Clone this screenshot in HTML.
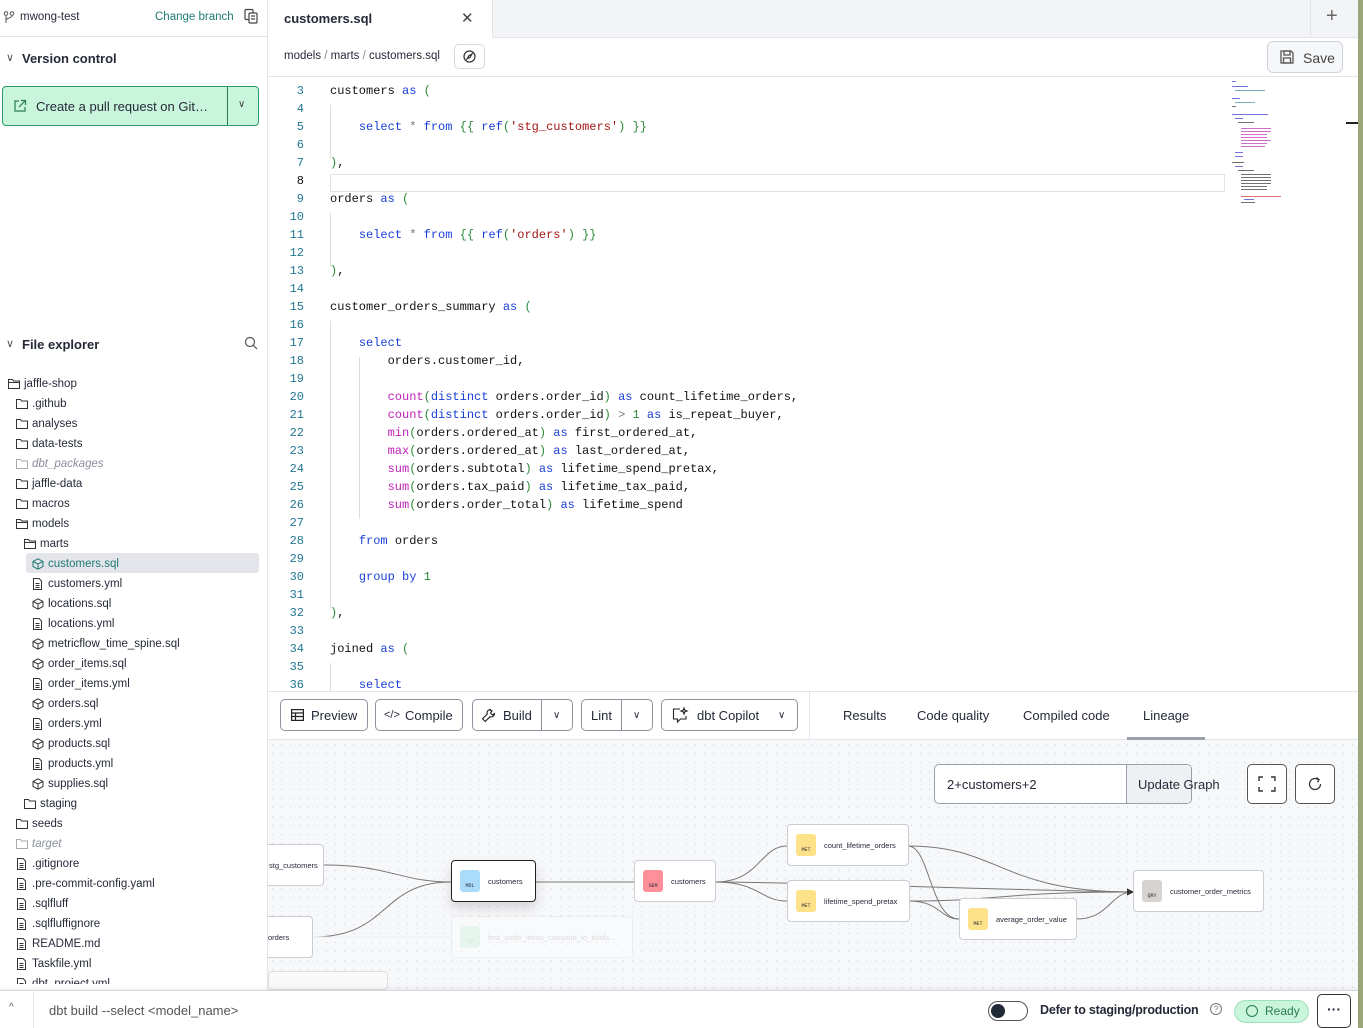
<!DOCTYPE html>
<html><head><meta charset="utf-8"><style>
*{box-sizing:border-box;margin:0;padding:0}
body{width:1363px;height:1028px;overflow:hidden;background:#fff;font-family:"Liberation Sans",sans-serif;color:#262a38;position:relative}
.abs{position:absolute}
#side{left:0;top:0;width:268px;height:990px;border-right:1px solid #e3e5ea;background:#fff;z-index:5}
.tr{position:absolute;height:20px;font-size:11.5px;line-height:20px;white-space:nowrap;color:#262a38}
.tr svg{position:absolute;top:4px}
.it{font-style:italic;color:#8a8f9b}
#code{left:268px;top:78px;width:1090px;height:613px;overflow:hidden;font-family:"Liberation Mono",monospace;font-size:12px}
.ln{position:absolute;left:0;width:36px;text-align:right;color:#237893;height:18px;line-height:18px}
.cl{position:absolute;left:62px;height:18px;line-height:18px;white-space:pre;color:#111}
.k{color:#1a3fd9}.f{color:#c022b8}.p{color:#2c8a3a}.s{color:#a31515}.o{color:#777}
.btn{position:absolute;top:699px;height:32px;border:1px solid #8d929e;border-radius:5px;background:#fff;font-size:13px;line-height:31px;color:#262a38}
.node{position:absolute;height:42px;background:#fff;border:1px solid #c9ccd3;border-radius:4px;font-size:7.5px;line-height:41px;white-space:nowrap;color:#262a38}
.badge{position:absolute;left:8px;top:9px;width:20px;height:22px;border-radius:3px;font-size:5px;line-height:8px;text-align:center;padding-top:12px;font-family:"Liberation Mono",monospace}
.nl{position:absolute;left:36px}
</style></head><body>
<div class="abs" style="left:1358px;top:0;width:5px;height:1028px;background:#9aa67a"></div>
<!-- sidebar -->
<div id="side" class="abs">
 <div class="abs" style="left:0;top:0;width:267px;height:37px;border-bottom:1px solid #e3e5ea"></div>
 <svg class="abs" style="left:3px;top:11px" width="12" height="13" viewBox="0 0 12 13" fill="none" stroke="#555" stroke-width="1"><circle cx="3" cy="2.5" r="1.8"/><circle cx="9" cy="2.5" r="1.8"/><path d="M3 4.5V12M9 4.5c0 3-6 2-6 5"/></svg>
 <div class="abs" style="left:20px;top:11px;font-size:11.5px">mwong-test</div>
 <div class="abs" style="left:155px;top:11px;font-size:11.5px;color:#1f7a74">Change branch</div>
 <svg class="abs" style="left:243px;top:8px" width="16" height="16" viewBox="0 0 16 16" fill="none" stroke="#444" stroke-width="1.2"><rect x="2" y="1.5" width="8" height="10" rx="1"/><rect x="6" y="5" width="8" height="10" rx="1" fill="#fff"/><path d="M8 8h4M8 11h4"/></svg>
 <div class="abs" style="left:6px;top:51px;font-size:11px;color:#555">&#x2228;</div>
 <div class="abs" style="left:22px;top:51px;font-size:13px;font-weight:bold">Version control</div>
 <div class="abs" style="left:2px;top:86px;width:257px;height:40px;border:1px solid #2b9a66;border-radius:4px;background:#c8f5dc"></div>
 <div class="abs" style="left:227px;top:87px;width:1px;height:38px;background:#2b7a55"></div>
 <svg class="abs" style="left:13px;top:99px" width="14" height="14" viewBox="0 0 14 14" fill="none" stroke="#2b7a55" stroke-width="1.2"><path d="M6 2H2v10h10V8M8 1.5h4.5V6M12.5 1.5 6 8"/></svg>
 <div class="abs" style="left:36px;top:99px;font-size:13px;color:#262a38">Create a pull request on Git…</div>
 <div class="abs" style="left:238px;top:99px;font-size:10px;color:#444">&#x2228;</div>
 <div class="abs" style="left:6px;top:337px;font-size:11px;color:#555">&#x2228;</div>
 <div class="abs" style="left:22px;top:337px;font-size:13px;font-weight:bold">File explorer</div>
 <svg class="abs" style="left:244px;top:336px" width="14" height="14" viewBox="0 0 14 14" fill="none" stroke="#555" stroke-width="1.2"><circle cx="6" cy="6" r="4.5"/><path d="M9.5 9.5 13 13"/></svg>
 <div class="abs" style="left:26px;top:553px;width:233px;height:20px;background:#e3e5ea;border-radius:3px"></div>
 <div id="tree"></div>
</div>
<script>
(function(){
var F='<svg width="12" height="11" viewBox="0 0 12 11" fill="none" stroke="#333" stroke-width="1"><path d="M.5 1.5h4l1 1.5h6v7.5H.5z"/></svg>';
var FO='<svg width="12" height="11" viewBox="0 0 12 11" fill="none" stroke="#333" stroke-width="1"><path d="M.5 1.5h4l1 1.5h6v7.5H.5zM.5 4.5h11"/></svg>';
var FG='<svg width="12" height="11" viewBox="0 0 12 11" fill="none" stroke="#aaa" stroke-width="1"><path d="M.5 1.5h4l1 1.5h6v7.5H.5z"/></svg>';
var C='<svg width="12" height="12" viewBox="0 0 12 12" fill="none" stroke="#333" stroke-width="1"><path d="M6 .8 11 3.5v5L6 11.2 1 8.5v-5zM1 3.5 6 6l5-2.5M6 6v5.2"/></svg>';
var CG=C.replace(/#333/g,'#1f7a74');
var D='<svg width="11" height="12" viewBox="0 0 11 12" fill="none" stroke="#333" stroke-width="1"><path d="M1.5.5h5.5l2.5 2.5v8.5h-8zM3.5 5.5h4M3.5 7.5h4M3.5 9.5h4"/></svg>';
var rows=[[8,FO,'jaffle-shop'],[16,F,'.github'],[16,F,'analyses'],[16,F,'data-tests'],[16,FG,'dbt_packages','it'],[16,F,'jaffle-data'],[16,F,'macros'],[16,FO,'models'],[24,FO,'marts'],[32,CG,'customers.sql','g'],[32,D,'customers.yml'],[32,C,'locations.sql'],[32,D,'locations.yml'],[32,C,'metricflow_time_spine.sql'],[32,C,'order_items.sql'],[32,D,'order_items.yml'],[32,C,'orders.sql'],[32,D,'orders.yml'],[32,C,'products.sql'],[32,D,'products.yml'],[32,C,'supplies.sql'],[24,F,'staging'],[16,F,'seeds'],[16,FG,'target','it'],[16,D,'.gitignore'],[16,D,'.pre-commit-config.yaml'],[16,D,'.sqlfluff'],[16,D,'.sqlfluffignore'],[16,D,'README.md'],[16,D,'Taskfile.yml'],[16,D,'dbt_project.yml']];
var h='';rows.forEach(function(r,i){var y=374+i*20;if(y>975)return;var st=r[3]=='g'?'color:#1f7a74':'';var cls=r[3]=='it'?'it':'';
h+='<div class="tr" style="left:'+r[0]+'px;top:'+y+'px;width:240px;'+(y>960?'height:10px;overflow:hidden;':'')+'">'+r[1].replace('<svg','<svg style="left:0"')+'<span class="'+cls+'" style="position:absolute;left:16px;'+st+'">'+r[2]+'</span></div>';});
document.getElementById('tree').innerHTML=h;
})();
</script>
<!-- tab bar -->
<div class="abs" style="left:268px;top:0;width:1090px;height:38px;background:#f3f4f6;border-bottom:1px solid #e3e5ea"></div>
<div class="abs" style="left:268px;top:0;width:225px;height:39px;background:#fff;border-right:1px solid #e3e5ea"></div>
<div class="abs" style="left:284px;top:11px;font-size:13px;font-weight:bold">customers.sql</div>
<div class="abs" style="left:461px;top:9px;font-size:15px;color:#444">&#x2715;</div>
<div class="abs" style="left:1310px;top:0;width:48px;height:38px;border-left:1px solid #e3e5ea"></div>
<div class="abs" style="left:1326px;top:5px;font-size:20px;color:#666">+</div>
<div class="abs" style="left:268px;top:38px;width:1090px;height:39px;background:#fff;border-bottom:1px solid #e3e5ea"></div>
<div class="abs" style="left:284px;top:50px;font-size:11.5px">models <span style="color:#888">/</span> marts <span style="color:#888">/</span> customers.sql</div>
<div class="abs" style="left:454px;top:44px;width:31px;height:25px;border:1px solid #d5d8de;border-radius:5px"></div>
<svg class="abs" style="left:462px;top:49px" width="15" height="15" viewBox="0 0 15 15" fill="none" stroke="#333" stroke-width="1.2"><circle cx="7.5" cy="7.5" r="5.5"/><path d="M10 5 8.2 8.2 5 10l1.8-3.2z"/></svg>
<div class="abs" style="left:1267px;top:41px;width:76px;height:32px;border:1px solid #cfd2d8;border-radius:6px;background:#f6f7f9"></div>
<svg class="abs" style="left:1279px;top:49px" width="16" height="16" viewBox="0 0 16 16" fill="none" stroke="#555" stroke-width="1.3"><path d="M2 2h10l2 2v10H2z"/><rect x="5" y="2" width="6" height="4"/><rect x="4.5" y="9" width="7" height="5"/></svg>
<div class="abs" style="left:1303px;top:50px;font-size:14px;color:#444">Save</div>
<!-- code -->
<div id="code" class="abs">
 <div class="abs" style="left:62px;top:96px;width:895px;height:18px;border:1px solid #e2e2e2"></div>
 <div class="abs" style="left:62px;top:27px;width:1px;height:54px;background:#ddd"></div>
 <div class="abs" style="left:62px;top:135px;width:1px;height:54px;background:#ddd"></div>
 <div class="abs" style="left:62px;top:243px;width:1px;height:288px;background:#ddd"></div>
 <div class="abs" style="left:91px;top:279px;width:1px;height:162px;background:#ddd"></div>
 <div class="abs" style="left:62px;top:585px;width:1px;height:40px;background:#ddd"></div>
 <div id="lines"></div>
 <div class="abs" style="left:1078px;top:44px;width:12px;height:2px;background:#222"></div>
 <div id="mini" class="abs" style="left:964px;top:0;width:114px;height:130px"></div>
</div>
<script>
(function(){
var L={3:'customers <k>as</k> <p>(</p>',5:'    <k>select</k> <o>*</o> <k>from</k> <p>{{</p> <k>ref</k><p>(</p><s>\'stg_customers\'</s><p>)</p> <p>}}</p>',7:'<p>)</p>,',9:'orders <k>as</k> <p>(</p>',11:'    <k>select</k> <o>*</o> <k>from</k> <p>{{</p> <k>ref</k><p>(</p><s>\'orders\'</s><p>)</p> <p>}}</p>',13:'<p>)</p>,',15:'customer_orders_summary <k>as</k> <p>(</p>',17:'    <k>select</k>',18:'        orders.customer_id,',20:'        <f>count</f><p>(</p><k>distinct</k> orders.order_id<p>)</p> <k>as</k> count_lifetime_orders,',21:'        <f>count</f><p>(</p><k>distinct</k> orders.order_id<p>)</p> <o>&gt;</o> <p>1</p> <k>as</k> is_repeat_buyer,',22:'        <f>min</f><p>(</p>orders.ordered_at<p>)</p> <k>as</k> first_ordered_at,',23:'        <f>max</f><p>(</p>orders.ordered_at<p>)</p> <k>as</k> last_ordered_at,',24:'        <f>sum</f><p>(</p>orders.subtotal<p>)</p> <k>as</k> lifetime_spend_pretax,',25:'        <f>sum</f><p>(</p>orders.tax_paid<p>)</p> <k>as</k> lifetime_tax_paid,',26:'        <f>sum</f><p>(</p>orders.order_total<p>)</p> <k>as</k> lifetime_spend',28:'    <k>from</k> orders',30:'    <k>group by</k> <p>1</p>',32:'<p>)</p>,',34:'joined <k>as</k> <p>(</p>',36:'    <k>select</k>'};
var h='';for(var n=2;n<=37;n++){var y=4+(n-3)*18;var c=L[n]||'';c=c.replace(/<(k|f|p|s|o)>/g,'<span class="$1">').replace(/<\/(k|f|p|s|o)>/g,'</span>');
h+='<div class="ln" style="top:'+y+'px;'+(n==8?'color:#111':'')+'">'+n+'</div><div class="cl" style="top:'+y+'px">'+c+'</div>';}
document.getElementById('lines').innerHTML=h;
var m='';var ls=[[0,3,4,'#33c'],[0,8,16,'#33c'],[3,12,30,'#48a'],[0,20,8,'#33c'],[3,24,20,'#48a'],[0,28,4,'#333'],[0,36,36,'#33c'],[3,40,8,'#33c'],[6,44,16,'#333'],[9,50,30,'#b3b'],[9,53,30,'#b3b'],[9,56,26,'#b3b'],[9,59,26,'#b3b'],[9,62,30,'#b3b'],[9,65,26,'#b3b'],[9,68,24,'#b3b'],[3,74,8,'#33c'],[3,78,8,'#33c'],[0,84,12,'#333'],[3,88,8,'#33c'],[6,92,16,'#333'],[9,96,30,'#333'],[9,99,30,'#333'],[9,102,30,'#333'],[9,105,30,'#333'],[9,108,26,'#333'],[9,111,26,'#333'],[9,118,40,'#c33'],[12,121,10,'#33c'],[9,124,14,'#333']];
ls.forEach(function(a){m+='<div style="position:absolute;left:'+a[0]+'px;top:'+a[1]+'px;width:'+a[2]+'px;height:1px;background:'+a[3]+';opacity:.7"></div>'});
document.getElementById('mini').innerHTML=m;
})();
</script>
<!-- toolbar -->
<div class="abs" style="left:268px;top:691px;width:1090px;height:49px;background:#fff;border-top:1px solid #e3e5ea;border-bottom:1px solid #e3e5ea"></div>
<div class="abs" style="left:809px;top:692px;width:1px;height:47px;background:#e3e5ea"></div>
<div class="btn" style="left:280px;width:88px"><svg style="position:absolute;left:10px;top:9px" width="13" height="12" viewBox="0 0 13 12" fill="none" stroke="#222" stroke-width="1.2"><rect x=".6" y=".6" width="11.8" height="10.8"/><path d="M.6 4h11.8M.6 7.5h11.8M4.5 4v7.4"/></svg><span style="position:absolute;left:30px">Preview</span></div>
<div class="btn" style="left:375px;width:88px"><span style="position:absolute;left:8px;font-size:11px">&lt;/&gt;</span><span style="position:absolute;left:29px">Compile</span></div>
<div class="btn" style="left:472px;width:101px"><svg style="position:absolute;left:8px;top:8px" width="15" height="15" viewBox="0 0 15 15" fill="none" stroke="#222" stroke-width="1.1"><path d="M9.5 1.5a3.5 3.5 0 0 0-3.3 4.6L1.5 10.8l2.7 2.7 4.7-4.7a3.5 3.5 0 0 0 4.6-3.3l-2 1.5-2-2 1.5-2a3 3 0 0 0-1.5-.5z"/></svg><span style="position:absolute;left:30px">Build</span><span style="position:absolute;left:68px;top:0;width:1px;height:30px;background:#8d929e"></span><span style="position:absolute;left:80px;font-size:10px">&#x2228;</span></div>
<div class="btn" style="left:581px;width:72px"><span style="position:absolute;left:9px">Lint</span><span style="position:absolute;left:39px;top:0;width:1px;height:30px;background:#8d929e"></span><span style="position:absolute;left:51px;font-size:10px">&#x2228;</span></div>
<div class="btn" style="left:661px;width:137px"><svg style="position:absolute;left:10px;top:7px" width="17" height="17" viewBox="0 0 17 17" fill="none" stroke="#222" stroke-width="1.1"><path d="M8 2H1.5v10h4v3l3-3H14V9"/><path d="M12 1l.8 2.2L15 4l-2.2.8L12 7l-.8-2.2L9 4l2.2-.8z"/></svg><span style="position:absolute;left:35px">dbt Copilot</span><span style="position:absolute;left:116px;font-size:10px">&#x2228;</span></div>
<div class="abs" style="left:843px;top:708px;font-size:13px">Results</div>
<div class="abs" style="left:917px;top:708px;font-size:13px">Code quality</div>
<div class="abs" style="left:1023px;top:708px;font-size:13px">Compiled code</div>
<div class="abs" style="left:1143px;top:708px;font-size:13px">Lineage</div>
<div class="abs" style="left:1127px;top:737px;width:78px;height:3px;background:#9aa0ab"></div>
<!-- graph -->
<div class="abs" style="left:268px;top:740px;width:1090px;height:250px;background-color:#f7f8fa;background-image:radial-gradient(#d3d6dc 0.7px,transparent 0.8px);background-size:9px 9px"></div>
<div class="abs" style="left:934px;top:764px;width:258px;height:40px;border:1px solid #9aa0ab;border-radius:5px;background:#fff;overflow:hidden"><div style="position:absolute;left:191px;top:0;width:67px;height:40px;background:#eef0f3;border-left:1px solid #9aa0ab"></div></div>
<div class="abs" style="left:947px;top:777px;font-size:13px">2+customers+2</div>
<div class="abs" style="left:1138px;top:777px;font-size:13px">Update Graph</div>
<div class="abs" style="left:1247px;top:764px;width:40px;height:40px;border:1px solid #555;border-radius:5px;background:#fff"></div>
<svg class="abs" style="left:1258px;top:776px" width="18" height="16" viewBox="0 0 18 16" fill="none" stroke="#333" stroke-width="1.4"><path d="M1 5V1h4M13 1h4v4M17 11v4h-4M5 15H1v-4"/></svg>
<div class="abs" style="left:1295px;top:764px;width:40px;height:40px;border:1px solid #555;border-radius:5px;background:#fff"></div>
<svg class="abs" style="left:1306px;top:775px" width="18" height="18" viewBox="0 0 18 18" fill="none" stroke="#333" stroke-width="1.3"><path d="M14.5 9A5.5 5.5 0 1 1 12 4.4M10.5 2.5 13 4.5l-1.5 2.8"/></svg>
<svg class="abs" style="left:0;top:0" width="1363" height="1028" fill="none" stroke="#777" stroke-width="1">
<path d="M324 865C390 865 400 882 451 882"/>
<path d="M313 937C390 937 380 882 451 882"/>
<path d="M313 937H451" stroke="#eee"/>
<path d="M535 882H634"/>
<path d="M715 882C760 882 760 846 787 846"/>
<path d="M715 882C760 882 760 901 787 901"/>
<path d="M715 882C800 882 1000 890 1133 892"/>
<path d="M908 846C1000 846 1000 892 1133 892"/>
<path d="M908 846C930 846 930 919 959 919"/>
<path d="M909 901C1000 901 1000 892 1133 892"/>
<path d="M909 901C940 901 940 919 959 919"/>
<path d="M1076 919C1110 919 1110 892 1133 892"/>
<path d="M1127 889l6 3-6 3" fill="#333" stroke="#333"/>
</svg>
<div class="node" style="left:240px;top:844px;width:84px"><span class="nl" style="left:28px">stg_customers</span></div>
<div class="node" style="left:240px;top:916px;width:73px"><span class="nl" style="left:27px">orders</span></div>
<div class="node" style="left:451px;top:916px;width:182px;opacity:.35;border-color:#ddd"><div class="badge" style="background:#c8f5dc;color:#7c9">TST</div><span class="nl" style="color:#aaa">test_order_items_compute_to_bools...</span></div>
<div class="node" style="left:268px;top:971px;width:120px;height:19px;border-color:#ddd;background:#f9f9fa"></div>
<div class="node" style="left:451px;top:860px;width:85px;border-color:#222;box-shadow:0 6px 12px rgba(0,0,0,.15)"><div class="badge" style="background:#a8dcfa">MDL</div><span class="nl">customers</span></div>
<div class="node" style="left:634px;top:860px;width:82px"><div class="badge" style="background:#ff909a">SEM</div><span class="nl">customers</span></div>
<div class="node" style="left:787px;top:824px;width:122px"><div class="badge" style="background:#fde28a">MET</div><span class="nl">count_lifetime_orders</span></div>
<div class="node" style="left:787px;top:880px;width:123px"><div class="badge" style="background:#fde28a">MET</div><span class="nl">lifetime_spend_pretax</span></div>
<div class="node" style="left:959px;top:898px;width:118px"><div class="badge" style="background:#fde28a">MET</div><span class="nl">average_order_value</span></div>
<div class="node" style="left:1133px;top:870px;width:131px"><div class="badge" style="background:#d6d3d0">QRY</div><span class="nl">customer_order_metrics</span></div>
<!-- bottom bar -->
<div class="abs" style="left:0;top:990px;width:1358px;height:38px;background:#fff;border-top:1px solid #d5d8de;box-shadow:0 -2px 4px rgba(0,0,0,.06);z-index:6"></div>
<div style="position:absolute;left:0;top:990px;width:1358px;height:38px;z-index:7">
<div class="abs" style="left:33px;top:1px;width:1px;height:37px;background:#e3e5ea"></div>
<div class="abs" style="left:9px;top:12px;font-size:10px;color:#555">^</div>
<div class="abs" style="left:49px;top:13px;font-size:13px;color:#555">dbt build --select &lt;model_name&gt;</div>
<div class="abs" style="left:988px;top:11px;width:40px;height:20px;border:1px solid #555;border-radius:10px"></div>
<div class="abs" style="left:991px;top:14px;width:14px;height:14px;border-radius:7px;background:#222a38"></div>
<div class="abs" style="left:1040px;top:13px;font-size:12.5px;font-weight:bold;letter-spacing:-0.2px">Defer to staging/production</div>
<div class="abs" style="left:1210px;top:13px;width:12px;height:12px;border:1px solid #777;border-radius:6px;font-size:9px;line-height:11px;text-align:center;color:#777">?</div>
<div class="abs" style="left:1234px;top:10px;width:75px;height:23px;border-radius:12px;background:#c8f5dc;border:1px solid #9fe0bc"></div>
<div class="abs" style="left:1246px;top:15px;width:12px;height:12px;border:1.3px solid #2b7a55;border-radius:6px"></div>
<div class="abs" style="left:1265px;top:14px;font-size:12px;color:#2b7a55">Ready</div>
<div class="abs" style="left:1317px;top:4px;width:34px;height:34px;border:1px solid #333;border-radius:5px;background:#fff;text-align:center;font-size:14px;font-weight:bold;line-height:28px">···</div>
</div>
</body></html>
